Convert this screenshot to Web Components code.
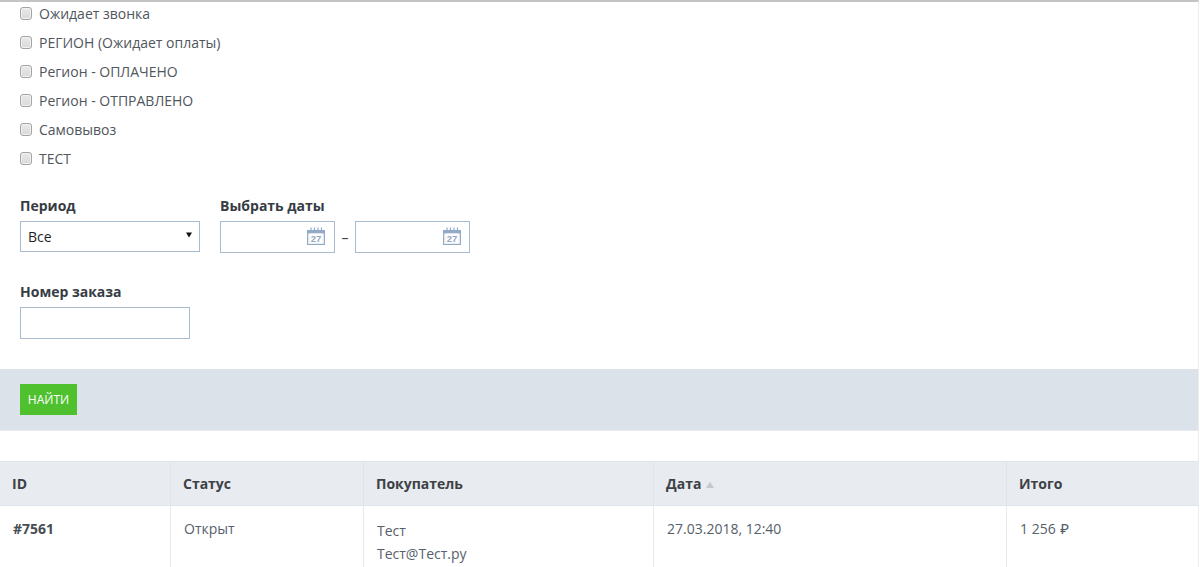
<!DOCTYPE html>
<html lang="ru">
<head>
<meta charset="utf-8">
<title>Заказы</title>
<style>
html, body { margin: 0; padding: 0; background: #fff; }
body { font-family: "Open Sans", "Noto Sans", sans-serif; font-size: 14px; color: #3b4045; overflow: hidden; height: 567px; }
</style>
</head>
<body>

<orders-page>
  <order-filter>
    <status-check>Ожидает звонка</status-check>
    <status-check>РЕГИОН (Ожидает оплаты)</status-check>
    <status-check>Регион - ОПЛАЧЕНО</status-check>
    <status-check>Регион - ОТПРАВЛЕНО</status-check>
    <status-check>Самовывоз</status-check>
    <status-check>ТЕСТ</status-check>
  </order-filter>
  <find-bar>НАЙТИ</find-bar>
  <orders-table></orders-table>
</orders-page>

<template id="tpl-check">
<style>
:host { display: flex; align-items: center; height: 29px; }
input { appearance: none; -webkit-appearance: none; box-sizing: border-box; width: 12px; height: 13px; margin: 0 7px 0 0; border: 1px solid #a3a3a3; border-radius: 3px;
  background: linear-gradient(#e9e9e9, #d9d9d9); box-shadow: inset 0 0 0 1px #f2f2f2; flex: none; }
span { color: #50565c; }
</style>
<input type="checkbox"><span><slot></slot></span>
</template>

<template id="tpl-filter">
<style>
:host { display: block; padding: 0 20px; }
.checks { display: flex; flex-direction: column; margin-top: -3px; }
label { display: block; font-weight: 700; font-size: 14px; line-height: 19px; color: #363c44; margin-bottom: 6px; }
.row { display: flex; gap: 20px; margin-top: 23px; }
.dates { display: flex; align-items: center; }
.dash { width: 20px; height: 32px; text-align: center; color: #3b4045; line-height: 34px; }
.select { box-sizing: border-box; width: 180px; height: 31px; border: 1px solid #a9bbcf; display: flex; align-items: center; justify-content: space-between; padding: 0 7px; font-size: 14px; color: #1f1f1f; }
.select svg { display: block; margin-top: -3px; }
.field { box-sizing: border-box; height: 32px; border: 1px solid #a9bbcf; background: #fff; display: flex; align-items: center; justify-content: flex-end; padding-right: 8px; }
.field.date { width: 115px; }
.field.first { padding-right: 9px; }
.field.num { width: 170px; }
.order { margin-top: 29px; }
date-icon { margin-top: -1px; }
</style>
<div class="checks"><slot></slot></div>
<div class="row">
  <div>
    <label>Период</label>
    <div class="select"><span>Все</span><svg width="6" height="6" viewBox="0 0 6 6"><path d="M0 .5h6L3 5.5z" fill="#111"/></svg></div>
  </div>
  <div>
    <label>Выбрать даты</label>
    <div class="dates">
      <div class="field date first"><date-icon></date-icon></div>
      <div class="dash">–</div>
      <div class="field date"><date-icon></date-icon></div>
    </div>
  </div>
</div>
<div class="order">
  <label>Номер заказа</label>
  <div class="field num"></div>
</div>
</template>

<template id="tpl-icon">
<style>
:host { display: block; width: 18px; height: 19px; }
svg { display: block; }
text { font-family: "Liberation Sans", sans-serif; font-size: 9.5px; font-weight: 700; fill: #94a6c0; }
</style>
<svg width="18" height="19" viewBox="0 0 18 19">
  <rect x=".5" y="3.500" width="17" height="14" fill="#e6ebf2" stroke="#93aac6"/>
  <rect x="1" y="4" width="16" height="2.500" fill="#93aac6"/>
  <path d="M4 .5v4M7.500 .5v4M11 .5v4M14.500 .5v4" stroke="#93aac6" stroke-width="1.200"/>
  <rect x="2.500" y="6.500" width="13" height="9.500" fill="#fff"/>
  <text x="9" y="15" text-anchor="middle">27</text>
</svg>
</template>

<template id="tpl-bar">
<style>
:host { display: block; box-sizing: border-box; height: 62px; margin-top: 30px; padding: 15px 20px 0; background: #dce2ea; border-bottom: 1px solid #e6eaf0; }
button { display: block; height: 31px; width: 57px; padding: 0; border: 0; background: #4fc12f; color: #fff; font: 400 12px "Open Sans", sans-serif; }
</style>
<button><slot></slot></button>
</template>

<template id="tpl-table">
<style>
:host { display: block; margin-top: 30px; }
.grid { display: grid; grid-template-columns: 171px 193px 290px 353px 191px; }
.head { height: 45px; box-sizing: border-box; background: #e8ebf0; border-top: 1px solid #dfe4ea; border-bottom: 1px solid #dfe4ea; border-right: 1px solid #dfe4ea; padding: 12px 12px 0; font-weight: 700; font-size: 14px; line-height: 19px; color: #3d4146; }
.head:nth-child(5), .cell:last-child { border-right: 0; }
.cell { height: 70px; box-sizing: border-box; border-right: 1px solid #e6eaf0; padding: 13px 13px 0; font-size: 14px; line-height: 20px; color: #56606b; }
.id { font-weight: 700; color: #474d52; }
.buyer { padding-top: 13px; line-height: 23px; }
.arrow { display: inline-block; width: 0; height: 0; margin-left: 1px; border: 4px solid transparent; border-top: 0; border-bottom: 6px solid #c3c9d0; vertical-align: 1px; }
.rub { font-size: 15px; line-height: 1; margin-left: 1px; }
</style>
<div class="grid">
  <div class="head">ID</div>
  <div class="head">Статус</div>
  <div class="head">Покупатель</div>
  <div class="head">Дата <span class="arrow"></span></div>
  <div class="head">Итого</div>
  <div class="cell id">#7561</div>
  <div class="cell">Открыт</div>
  <div class="cell buyer">Тест<br>Тест@Тест.ру</div>
  <div class="cell">27.03.2018, 12:40</div>
  <div class="cell">1 256 <span class="rub">₽</span></div>
</div>
</template>

<template id="tpl-page">
<style>
:host { display: block; box-sizing: border-box; width: 1199px; height: 567px; overflow: hidden; border-top: 2px solid #c4c4c4; border-right: 1px solid #ededed; }
</style>
<slot></slot>
</template>

<script>
function register(name, tplId) {
  customElements.define(name, class extends HTMLElement {
    constructor() {
      super();
      this.attachShadow({mode: 'open'}).appendChild(document.getElementById(tplId).content.cloneNode(true));
    }
  });
}
register('date-icon', 'tpl-icon');
register('status-check', 'tpl-check');
register('order-filter', 'tpl-filter');
register('find-bar', 'tpl-bar');
register('orders-table', 'tpl-table');
register('orders-page', 'tpl-page');
</script>
</body>
</html>
